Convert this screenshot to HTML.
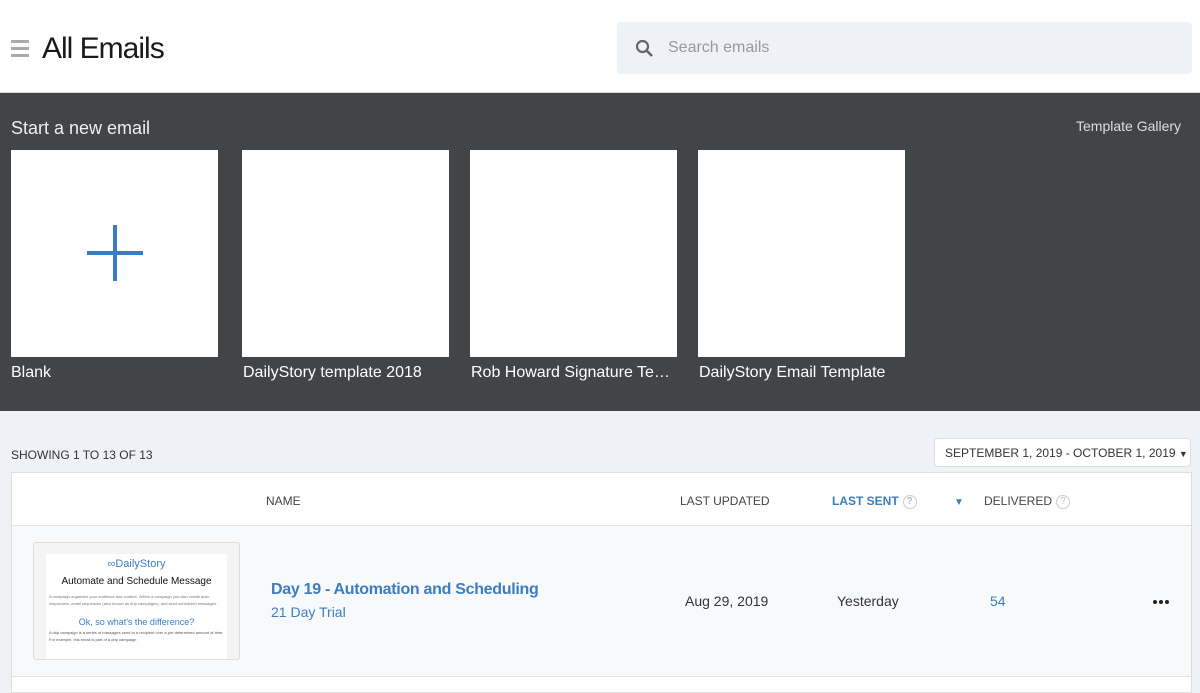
<!DOCTYPE html>
<html><head><meta charset="utf-8"><style>
*{box-sizing:border-box;margin:0;padding:0}
body{width:1200px;height:693px;overflow:hidden;background:#eef1f5;font-family:"Liberation Sans",sans-serif;position:relative}
.a{position:absolute}
.top{left:0;top:0;width:1200px;height:93px;background:#fff;border-bottom:1px solid #ddd}
.dark{left:0;top:93px;width:1200px;height:318px;background:#414548}
.card{background:#fff;width:207px;height:207px;top:150px}
.lbl{color:#fff;font-size:16px;top:364px}
.th{font-size:12px;color:#444;top:494px}
.q{display:inline-block;width:14px;height:14px;border:1px solid #ccc;border-radius:50%;font-size:10px;color:#bbb;text-align:center;line-height:12px;vertical-align:1px;margin-left:4px}
.dot{position:absolute;top:600px;width:4px;height:4px;border-radius:50%;background:#222}
</style></head><body>
<div class="a top"></div>
<div class="a" style="left:11px;top:40px;width:18px;height:3px;background:#aaa"></div>
<div class="a" style="left:11px;top:47px;width:18px;height:3px;background:#aaa"></div>
<div class="a" style="left:11px;top:54px;width:18px;height:3px;background:#aaa"></div>
<div class="a" style="left:42px;top:32px;font-size:30px;color:#1a1a1a;letter-spacing:-1px">All Emails</div>
<div class="a" style="left:617px;top:22px;width:575px;height:52px;background:#eef1f5;border-radius:4px"></div>
<svg class="a" style="left:634px;top:38px" width="22" height="22" viewBox="0 0 22 22"><circle cx="8.5" cy="8.5" r="5.5" fill="none" stroke="#666" stroke-width="2.2"/><path d="M12.5 12.5L18 18" stroke="#666" stroke-width="2.6"/></svg>
<div class="a" style="left:668px;top:39px;font-size:16px;color:#999">Search emails</div>
<div class="a dark"></div>
<div class="a" style="left:11px;top:118px;font-size:18px;color:#eee">Start a new email</div>
<div class="a" style="left:1076px;top:118px;font-size:14px;color:#ddd">Template Gallery</div>
<div class="a card" style="left:11px"><div class="a" style="left:76px;top:101px;width:56px;height:4px;background:#3b7dc0"></div><div class="a" style="left:102px;top:75px;width:4px;height:56px;background:#3b7dc0"></div></div>
<div class="a card" style="left:242px"></div>
<div class="a card" style="left:470px"></div>
<div class="a card" style="left:698px"></div>
<div class="a lbl" style="left:11px">Blank</div>
<div class="a lbl" style="left:243px">DailyStory template 2018</div>
<div class="a lbl" style="left:471px">Rob Howard Signature Te…</div>
<div class="a lbl" style="left:699px">DailyStory Email Template</div>
<div class="a" style="left:11px;top:448px;font-size:12px;color:#333">SHOWING 1 TO 13 OF 13</div>
<div class="a" style="left:934px;top:438px;width:257px;height:29px;background:#fff;border:1px solid #ddd;border-radius:4px;font-size:12px;color:#333;padding:7px 0 0 10px">SEPTEMBER 1, 2019 - OCTOBER 1, 2019 <span style="font-size:9px">▼</span></div>
<div class="a" style="left:11px;top:472px;width:1181px;height:221px;background:#fff;border:1px solid #ddd"></div>
<div class="a" style="left:12px;top:525px;width:1179px;height:152px;background:#f8f9fb;border-top:1px solid #e2e2e2;border-bottom:1px solid #e2e2e2"></div>
<div class="a th" style="left:266px">NAME</div>
<div class="a th" style="left:680px">LAST UPDATED</div>
<div class="a th" style="left:832px;color:#3b7dc0;font-weight:bold">LAST SENT<span class="q">?</span></div>
<div class="a" style="left:954px;top:497px;font-size:10px;color:#3b7dc0">▼</div>
<div class="a th" style="left:984px">DELIVERED<span class="q">?</span></div>
<div class="a" style="left:33px;top:542px;width:207px;height:118px;background:#f4f4f4;border:1px solid #ddd;border-radius:3px;overflow:hidden">
<div class="a" style="left:12px;top:11px;width:181px;height:110px;background:#fff;text-align:center">
<div style="color:#3b7dc0;font-size:11px;margin-top:4px">∞DailyStory</div>
<div style="font-size:10px;color:#111;margin-top:6px">Automate and Schedule Message</div>
<div style="font-size:4px;color:#777;text-align:left;padding:6px 3px;line-height:7px">A campaign organizes your audience and content. Within a campaign you also create auto-responders, email sequences (also known as drip campaigns), and send scheduled messages.</div>
<div style="color:#3b7dc0;font-size:9px;margin-top:4px">Ok, so what's the difference?</div>
<div style="font-size:4px;color:#555;text-align:left;padding:2px 3px;line-height:7px">A drip campaign is a series of messages send to a recipient over a pre determined amount of time. For example, this email is part of a drip campaign</div>
</div></div>
<div class="a" style="left:271px;top:581px;font-size:16px;color:#3b7dc0;font-weight:bold;letter-spacing:-0.3px">Day 19 - Automation and Scheduling</div>
<div class="a" style="left:271px;top:604px;font-size:14px;color:#3b7dc0">21 Day Trial</div>
<div class="a" style="left:685px;top:593px;font-size:14px;color:#333">Aug 29, 2019</div>
<div class="a" style="left:837px;top:593px;font-size:14px;color:#333">Yesterday</div>
<div class="a" style="left:990px;top:593px;font-size:14px;color:#3b7dc0">54</div>
<div class="dot" style="left:1153px"></div><div class="dot" style="left:1159px"></div><div class="dot" style="left:1165px"></div>
</body></html>
